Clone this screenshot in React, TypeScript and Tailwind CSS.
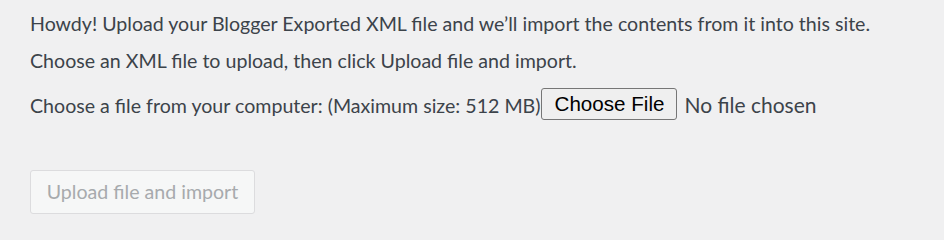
const sans = "font-['Lato','Noto_Sans',sans-serif]";

export default function App() {
    return (
        <div className={`bg-[#f0f0f1] min-h-screen w-[944px] h-[232px] overflow-hidden pl-[30px] pt-[11px] text-[#3c434a] text-[19.6px] leading-[26px] ${sans}`}>
            <p className="whitespace-nowrap">
                Howdy! Upload your Blogger Exported XML file and we’ll import the contents from it into this site.
            </p>
            <p className="mt-[11px] whitespace-nowrap">Choose an XML file to upload, then click Upload file and import.</p>

            <form className="mt-[14px]" onSubmit={(e) => e.preventDefault()}>
                <div className="flex items-center h-[32px] whitespace-nowrap">
                    <label htmlFor="upload" className="pt-[3px]">
                        Choose a file from your computer:
                    </label>
                    <span className="ml-[5px] pt-[3px]">(Maximum size: 512 MB)</span>
                    <label className="ml-[1px] flex items-center cursor-pointer">
                        <span className="h-[32px] w-[136px] flex items-center justify-center border border-[#767676] rounded-[3px] bg-[#efefef] text-black text-[20.6px] font-['Liberation_Sans',Arial,sans-serif] leading-none">
                            Choose File
                        </span>
                        <input id="upload" type="file" className="hidden" />
                        <span className="ml-[7px] pt-[2px] text-[21px]">No file chosen</span>
                    </label>
                </div>

                <button
                    type="submit"
                    disabled
                    className="mt-[50px] h-[44px] w-[225px] flex items-center justify-center border border-[#dcdcde] rounded-[3px] bg-[#f6f7f7] text-[#a7aaad] cursor-default"
                >
                    Upload file and import
                </button>
            </form>
        </div>
    );
}
